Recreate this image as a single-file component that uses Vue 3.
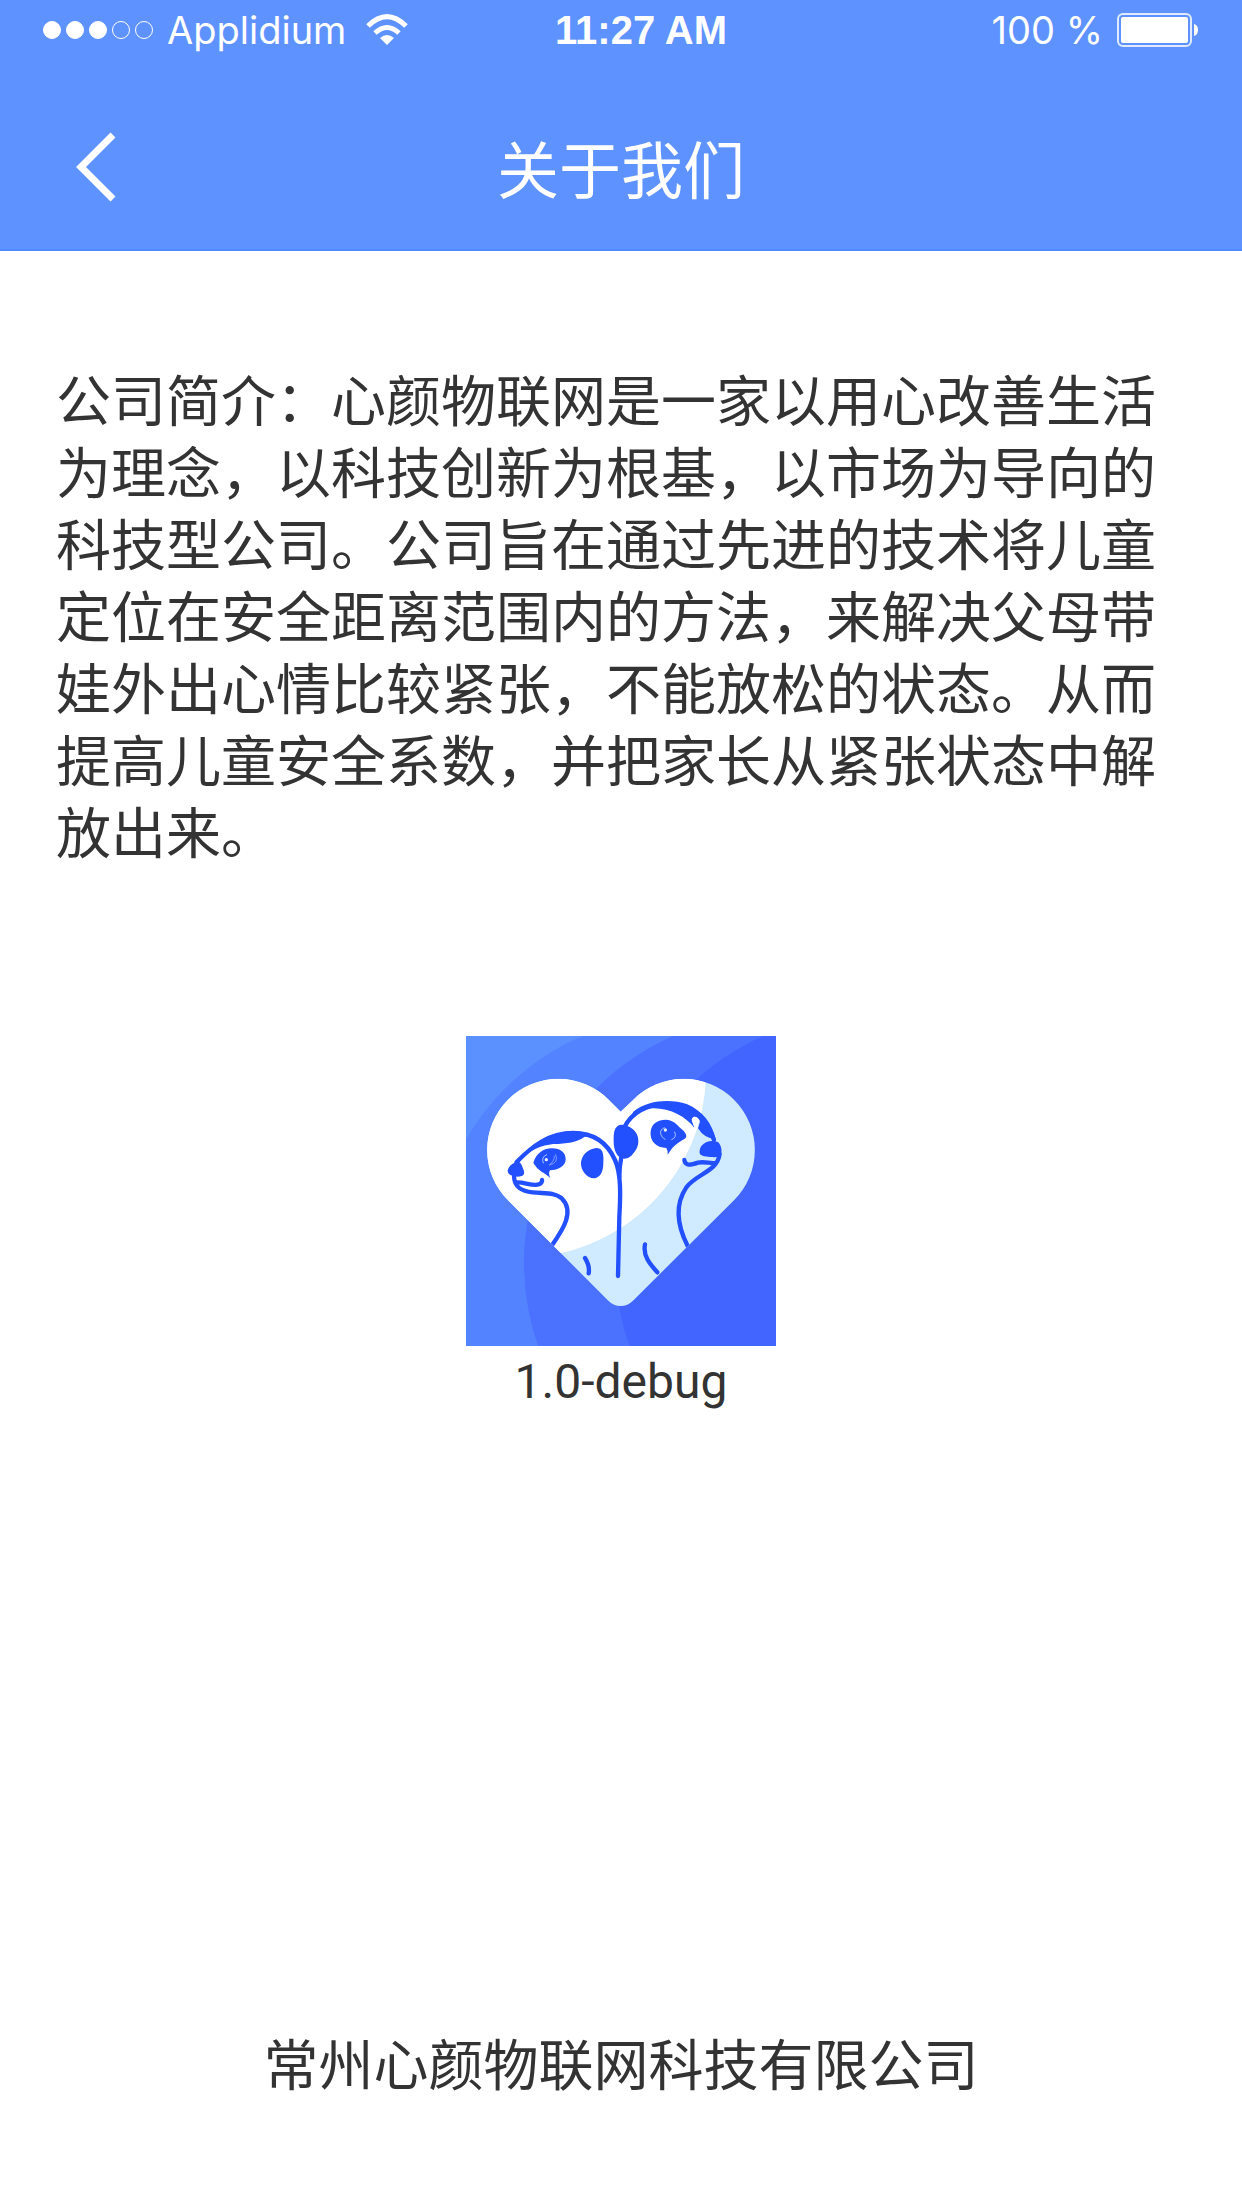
<script setup>
const signal = [true, true, true, false, false]
const title = '关于我们'
const intro =
  '公司简介：心颜物联网是一家以用心改善生活为理念，以科技创新为根基，以市场为导向的科技型公司。公司旨在通过先进的技术将儿童定位在安全距离范围内的方法，来解决父母带娃外出心情比较紧张，不能放松的状态。从而提高儿童安全系数，并把家长从紧张状态中解放出来。'
const version = '1.0-debug'
const company = '常州心颜物联网科技有限公司'
</script>

<template>
  <div class="page">
    <header class="top">
      <div class="status">
        <div class="status-left">
          <span class="signal">
            <i v-for="(on, i) in signal" :key="i" class="dot" :class="{ on }"></i>
          </span>
          <span class="carrier">Applidium</span>
          <svg class="wifi" viewBox="0 0 42 32" aria-hidden="true">
            <g fill="none" stroke="#fff" stroke-width="5">
              <path d="M2 12Q21 -7 40 12" />
              <path d="M9 19Q21 8 33 19" />
            </g>
            <path d="M14 24Q21 18 28 24L21 31Z" fill="#fff" />
          </svg>
        </div>
        <time class="clock">11:27 AM</time>
        <div class="status-right">
          <span>100 %</span>
          <svg class="battery" viewBox="0 0 82 34" aria-hidden="true">
            <rect x="1" y="1" width="73" height="32" rx="5" fill="none" stroke="#fff" stroke-opacity=".8" stroke-width="2" />
            <rect x="4" y="4" width="67" height="26" rx="2" fill="#fff" />
            <path d="M77 11Q81 12 81 17Q81 22 77 23Z" fill="#fff" />
          </svg>
        </div>
      </div>
      <nav class="nav">
        <button class="back" type="button" aria-label="返回">
          <svg viewBox="0 0 40 70" aria-hidden="true">
            <path d="M37 3L5 35L37 67" fill="none" stroke="#fff" stroke-width="7" />
          </svg>
        </button>
        <h1>{{ title }}</h1>
      </nav>
    </header>

    <main class="content">
      <p class="intro">{{ intro }}</p>
      <div class="app">
        <svg class="logo" viewBox="18 18 930 930" role="img" aria-label="心颜">
          <defs>
            <clipPath id="heart">
              <path d="M482 245L446 209A213 213 0 1 0 144 511L445 812Q461 828 482 828Q503 828 519 812L822 511A213 213 0 1 0 520 209Z" />
            </clipPath>
          </defs>
          <rect x="18" y="18" width="930" height="930" fill="#5b90ff" />
          <circle cx="660" cy="700" r="742" fill="#5483ff" />
          <circle cx="935" cy="700" r="743" fill="#4a71ff" />
          <circle cx="1212" cy="700" r="746" fill="#4264ff" />
          <g clip-path="url(#heart)">
            <rect x="18" y="18" width="930" height="930" fill="#d0eaff" />
            <circle cx="180" cy="125" r="558" fill="#fff" />
            <g fill="none" stroke="#2350ff" stroke-width="13" stroke-linecap="round" stroke-linejoin="round">
              <path d="M170 396C215 350 265 309 340 309C410 309 445 345 465 390C483 430 482 490 478 560L474 738" />
              <path d="M162 440C164 473 185 483 218 487C258 491 283 487 304 504C346 544 308 600 276 646" />
              <path d="M170 457C195 456 220 470 237 463C245 460 247 453 246 450" />
              <path d="M375 684Q390 708 386 730" />
              <path d="M478 440C478 400 484 385 486 370" />
              <path d="M494 290C514 250 560 222 615 222C690 222 742 265 762 330" />
              <path d="M779 372C772 425 710 431 679 472C645 523 651 585 683 648" />
              <path d="M673 390C676 408 690 406 714 398C735 393 750 402 765 399" />
              <path d="M555 643C548 677 570 703 592 727" />
            </g>
            <g fill="#2350ff">
              <path d="M178 390C225 340 274 303 345 304Q380 306 392 321L374 320C350 337 322 341 280 342C245 346 212 358 183 388Z" />
              <path d="M162 399C175 389 183 398 187 410C193 424 196 434 185 438C170 444 142 438 143 421Q146 408 162 399Z" />
              <path d="M220 398C229 371 247 356 276 355C302 355 318 369 317 389C316 408 295 420 270 421Q264 430 271 444C254 427 235 425 220 398Z" />
              <path d="M411 354C431 356 431 377 430 399C430 427 420 444 401 445C382 444 362 423 363 399C364 376 384 356 411 354Z" />
              <path d="M479 285Q490 282 502 288C522 295 536 313 535 334C535 354 524 366 514 377Q500 390 484 384C466 376 460 352 461 326C461 306 464 290 479 285Z" />
              <path d="M520 245C565 208 635 207 680 222C728 242 757 281 767 328Q732 325 714 295L720 275C717 261 701 257 695 268L703 293C678 261 631 234 578 235C550 235 527 246 510 266Z" />
              <path d="M572 304C575 281 593 269 617 269C641 270 651 284 662 295C677 307 682 317 677 324C664 333 646 342 634 358L623 374Q625 363 619 354C590 354 568 334 572 304Z" />
              <path d="M724 348C734 333 758 329 774 336C785 348 789 367 778 381C759 382 731 382 720 373C717 365 719 356 724 348Z" />
            </g>
            <path d="M697 277C690 257 713 255 718 272Q707 282 714 295Q704 296 697 277Z" fill="#fff" />
            <g fill="none" stroke="#a9c4ff" stroke-linecap="round">
              <path d="M260 374Q242 382 250 399" stroke-width="3" />
              <path d="M287 374Q298 398 268 405Q285 391 283 379" stroke-width="2" />
              <path d="M613 293C594 300 601 321 615 328" stroke-width="3" />
              <path d="M644 306Q652 322 635 329" stroke-width="3" />
            </g>
            <g fill="#e8f0ff">
              <circle cx="259" cy="389" r="5" />
              <circle cx="616" cy="300" r="5" />
            </g>
          </g>
        </svg>
        <p class="version">{{ version }}</p>
      </div>
    </main>

    <footer class="company">{{ company }}</footer>
  </div>
</template>

<style>
body {
  margin: 0;
  background: #fff;
}
</style>

<style scoped>
.page {
  display: flex;
  flex-direction: column;
  min-height: 100vh;
  color: #333;
  font-family: "Noto Sans CJK SC", sans-serif;
}

.top {
  box-sizing: border-box;
  color: #fff;
  background: #5e92ff;
  border-bottom: 2px solid #5189ff;
}

.status {
  display: grid;
  grid-template-columns: 1fr auto 1fr;
  align-items: center;
  height: 60px;
  padding: 0 43px;
  font: 400 38px/60px Inter, "Liberation Sans", sans-serif;
}

.status-left,
.status-right {
  display: flex;
  align-items: center;
}

.status-right {
  justify-content: flex-end;
  gap: 14px;
}

.signal {
  display: flex;
  gap: 5px;
  margin-right: 14px;
}

.dot {
  box-sizing: border-box;
  width: 18px;
  height: 18px;
  border: 1px solid #fff;
  border-radius: 50%;
}

.dot.on {
  background: #fff;
}

.wifi {
  width: 42px;
  height: 32px;
  margin-left: 20px;
}

.clock {
  padding-left: 40px;
  font: 700 40px/60px "Liberation Sans", sans-serif;
}

.battery {
  width: 82px;
  height: 34px;
}

.nav {
  display: grid;
  grid-template-columns: 1fr auto 1fr;
  align-items: center;
  padding: 58px 76px 33px;
}

.back {
  width: 40px;
  height: 70px;
  padding: 0;
  border: 0;
  background: none;
}

.back svg {
  display: block;
  width: 40px;
  height: 70px;
}

h1 {
  margin: 0;
  font-size: 62px;
  font-weight: 400;
  line-height: 98px;
}

.content {
  flex: 1;
  padding: 110px 56px 0;
}

.intro {
  margin: 0;
  font-size: 55px;
  line-height: 72px;
}

.app {
  display: flex;
  flex-direction: column;
  align-items: center;
  margin-top: 171px;
}

.logo {
  width: 310px;
  height: 310px;
}

.version {
  margin: 0;
  font: 400 48px/72px Roboto, sans-serif;
}

.company {
  padding: 0 56px 111px;
  font-size: 55px;
  line-height: 72px;
  text-align: center;
}
</style>
